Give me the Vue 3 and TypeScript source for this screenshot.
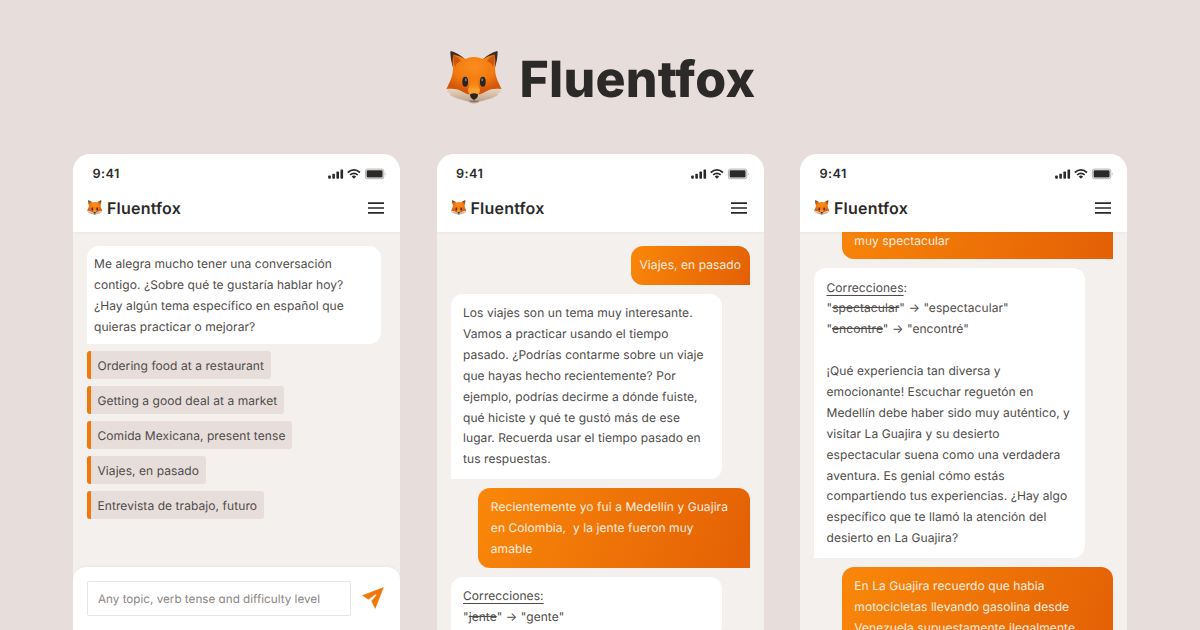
<script setup lang="ts">
import { defineComponent, h } from 'vue'

const Fox = defineComponent({
  name: 'FoxIcon',
  props: { uid: { type: String, required: true } },
  setup(props) {
    const u = props.uid
    return () =>
      h('svg', { viewBox: '0 0 56 54', 'aria-hidden': 'true' }, [
        h('defs', [
          h('radialGradient', { id: `${u}-face`, cx: '0.5', cy: '0.3', r: '0.62' }, [
            h('stop', { offset: '0', 'stop-color': '#fb8d1c' }),
            h('stop', { offset: '0.6', 'stop-color': '#f27a10' }),
            h('stop', { offset: '1', 'stop-color': '#d3560a' }),
          ]),
          h('linearGradient', { id: `${u}-jaw`, x1: '0', y1: '0', x2: '0', y2: '1' }, [
            h('stop', { offset: '0', 'stop-color': '#f6dfc6' }),
            h('stop', { offset: '1', 'stop-color': '#b59c88' }),
          ]),
          h('linearGradient', { id: `${u}-snout`, x1: '0', y1: '0', x2: '0', y2: '1' }, [
            h('stop', { offset: '0', 'stop-color': '#f98a14', 'stop-opacity': '0' }),
            h('stop', { offset: '0.65', 'stop-color': '#fda024' }),
            h('stop', { offset: '1', 'stop-color': '#f2a04a' }),
          ]),
        ]),
        h('path', { d: 'M1 37 L0 39 L2 40 L1 42 L4 43 L4 45 C10 49 18 50 22 51.5 Q28 55.5 34 51.5 C39 50 46 49 52 45 L52 43 L55 42 L54 40 L56 39 L54 36 Z', fill: `url(#${u}-jaw)` }),
        h('path', { d: 'M5 1 Q4 1 4.4 4 Q4.6 10 6.8 17 L19 9 Q12 3 5 1 Z M51 1 Q52 1 51.6 4 Q51.4 10 49.2 17 L37 9 Q44 3 51 1 Z', fill: '#3c2d25' }),
        h('path', { d: 'M7.5 4.6 Q14 6 19 9 Q28 5 37 9 Q42 6 48.5 4.6 Q50 10 49 17 C49 27 52 31 55.5 39 C49 38 43 39 39 42 Q34 45 31 44.5 L25 44.5 Q22 45 17 42 C13 39 7 38 .5 39 C4 31 7 27 7 17 Q6 9 7.5 4.6 Z', fill: `url(#${u}-face)` }),
        h('path', { d: 'M7.5 5 Q12 7 15 11 Q10 13 9 17 Q7 10 7.5 5 Z M48.5 5 Q44 7 41 11 Q46 13 47 17 Q49 10 48.5 5 Z', fill: '#cf560b' }),
        h('path', { d: 'M25 27 L31 27 Q32 35 34 40 Q34 45 28 46 Q22 45 22 40 Q24 35 25 27 Z', fill: `url(#${u}-snout)` }),
        h('ellipse', { cx: 19.2, cy: 31.8, rx: 2.9, ry: 5, fill: '#2a2422' }),
        h('ellipse', { cx: 36.8, cy: 31.8, rx: 2.9, ry: 5, fill: '#2a2422' }),
        h('ellipse', { cx: 19.8, cy: 29.8, rx: 1, ry: 1.5, fill: '#68788a' }),
        h('ellipse', { cx: 36.2, cy: 29.8, rx: 1, ry: 1.5, fill: '#68788a' }),
        h('path', { d: 'M24 44.5 Q28 42 32 44.5 Q32 48 28 50 Q24 48 24 44.5 Z', fill: '#2d2420' }),
        h('path', { d: 'M28 49 V51 M23.5 51 Q28 52 32.5 51', fill: 'none', stroke: '#6d584b', 'stroke-width': '0.8' }),
      ])
  },
})

interface Part {
  text: string
  mark?: 'under' | 'strike'
}
interface Message {
  from: 'bot' | 'user'
  kind?: string
  lines: Part[][]
}
interface Phone {
  id: string
  messages: Message[]
  topics?: string[]
  composer?: string
}

const plain = (...rows: string[]): Part[][] => rows.map((text) => [{ text }])

const phones: Phone[] = [
  {
    id: 'screen-start',
    messages: [
      {
        from: 'bot',
        kind: 'intro',
        lines: plain(
          'Me alegra mucho tener una conversación',
          'contigo. ¿Sobre qué te gustaría hablar hoy?',
          '¿Hay algún tema específico en español que',
          'quieras practicar o mejorar?',
        ),
      },
    ],
    topics: [
      'Ordering food at a restaurant',
      'Getting a good deal at a market',
      'Comida Mexicana, present tense',
      'Viajes, en pasado',
      'Entrevista de trabajo, futuro',
    ],
    composer: 'Any topic, verb tense and difficulty level',
  },
  {
    id: 'screen-travel',
    messages: [
      { from: 'user', kind: 'short', lines: plain('Viajes, en pasado') },
      {
        from: 'bot',
        lines: plain(
          'Los viajes son un tema muy interesante.',
          'Vamos a practicar usando el tiempo',
          'pasado. ¿Podrías contarme sobre un viaje',
          'que hayas hecho recientemente? Por',
          'ejemplo, podrías decirme a dónde fuiste,',
          'qué hiciste y qué te gustó más de ese',
          'lugar. Recuerda usar el tiempo pasado en',
          'tus respuestas.',
        ),
      },
      {
        from: 'user',
        lines: plain('Recientemente yo fui a Medellín y Guajira', 'en Colombia,  y la jente fueron muy', 'amable'),
      },
      {
        from: 'bot',
        lines: [
          [{ text: 'Correcciones:', mark: 'under' }],
          [{ text: '"' }, { text: 'jente', mark: 'strike' }, { text: '" → "gente"' }],
        ],
      },
    ],
  },
  {
    id: 'screen-corrections',
    messages: [
      { from: 'user', kind: 'cut', lines: plain('muy spectacular') },
      {
        from: 'bot',
        lines: [
          [{ text: 'Correcciones', mark: 'under' }, { text: ':' }],
          [{ text: '"' }, { text: 'spectacular', mark: 'strike' }, { text: '" → "espectacular"' }],
          [{ text: '"' }, { text: 'encontre', mark: 'strike' }, { text: '" → "encontré"' }],
          [{ text: ' ' }],
          ...plain(
            '¡Qué experiencia tan diversa y',
            'emocionante! Escuchar reguetón en',
            'Medellín debe haber sido muy auténtico, y',
            'visitar La Guajira y su desierto',
            'espectacular suena como una verdadera',
            'aventura. Es genial cómo estás',
            'compartiendo tus experiencias. ¿Hay algo',
            'específico que te llamó la atención del',
            'desierto en La Guajira?',
          ),
        ],
      },
      {
        from: 'user',
        lines: plain(
          'En La Guajira recuerdo que habia',
          'motocicletas llevando gasolina desde',
          'Venezuela supuestamente ilegalmente',
        ),
      },
    ],
  },
]
</script>

<template>
  <main class="page">
    <h1 class="hero">
      <Fox uid="hero" class="hero-fox" />
      <span class="hero-name">Fluentfox</span>
    </h1>
    <div class="phones">
      <section v-for="p in phones" :key="p.id" class="phone">
        <header class="head">
          <div class="status">
            <span class="time">9:41</span>
            <svg class="indicators" viewBox="0 0 60 12" aria-hidden="true">
              <g fill="#2b2a29">
                <rect x="1.2" y="7.5" width="2.6" height="3.2" rx="0.7" />
                <rect x="5.3" y="5.8" width="2.6" height="4.9" rx="0.7" />
                <rect x="9.4" y="3.6" width="2.6" height="7.1" rx="0.7" />
                <rect x="13.5" y="1.4" width="2.6" height="9.3" rx="0.7" />
                <path d="M26.9 10.7 L29.1 8.4 Q26.9 6.8 24.7 8.4 Z" />
              </g>
              <g fill="none" stroke="#2b2a29" stroke-width="1.7">
                <path d="M23.1 6.9 Q26.9 3.9 30.7 6.9" />
                <path d="M20.8 4.5 Q26.9 -0.6 33 4.5" />
              </g>
              <rect x="38.4" y="1.1" width="18.4" height="9.6" rx="2" fill="none" stroke="#aaa8a7" stroke-width="0.9" />
              <rect x="39.6" y="2.3" width="16" height="7.2" rx="1.1" fill="#2b2a29" />
              <path d="M58 4.4 Q59.4 6 58 7.6 Z" fill="#aaa8a7" />
            </svg>
          </div>
          <div class="bar">
            <span class="brand">
              <Fox :uid="p.id" class="brand-fox" />
              <span class="brand-name">Fluentfox</span>
            </span>
            <svg class="menu" viewBox="0 0 16 12" aria-hidden="true">
              <path d="M0 1.2 H16 M0 6 H16 M0 10.8 H16" stroke="#2b2a29" stroke-width="1.7" />
            </svg>
          </div>
        </header>
        <div class="chat">
          <div v-for="(m, i) in p.messages" :key="i" class="bubble" :class="[m.from, m.kind]">
            <div v-for="(line, j) in m.lines" :key="j" class="line">
              <span v-for="(part, k) in line" :key="k" :class="part.mark">{{ part.text }}</span>
            </div>
          </div>
          <ul v-if="p.topics" class="topics">
            <li v-for="t in p.topics" :key="t">{{ t }}</li>
          </ul>
        </div>
        <footer v-if="p.composer" class="composer">
          <div class="field">{{ p.composer }}</div>
          <svg class="send" viewBox="0 0 22 22" aria-hidden="true">
            <path d="M21.4 0.6 L0.5 8.4 L6.4 12.2 L13.4 7.3 Q14.8 7 14.4 8.4 L9.6 14 L13.2 21.4 Z" fill="#f07808" stroke="#f07808" stroke-width="0.5" stroke-linejoin="round" />
          </svg>
        </footer>
      </section>
    </div>
  </main>
</template>

<style>
body {
  margin: 0;
  overflow: hidden;
}
</style>

<style scoped>
.page {
  box-sizing: border-box;
  width: 1200px;
  height: 630px;
  overflow: hidden;
  display: flex;
  flex-direction: column;
  background: #e7dedc;
  font-family: Inter, "Liberation Sans", sans-serif;
  text-rendering: geometricPrecision;
  color: #4e4b49;
}
.hero {
  margin: 0;
  height: 154px;
  flex: none;
  box-sizing: border-box;
  padding: 50px 0 0 446px;
  display: flex;
  align-items: flex-start;
  color: #2b2a29;
}
.hero-fox {
  width: 56px;
  height: 54px;
}
.hero-name {
  margin-left: 17.5px;
  font-size: 50px;
  line-height: 60px;
  font-weight: 800;
  font-optical-sizing: none;
  letter-spacing: 0.25px;
}
.phones {
  flex: 1;
  min-height: 0;
  display: grid;
  grid-template-columns: repeat(3, 327px);
  gap: 36.5px;
  padding-left: 73px;
}
.phone {
  min-height: 0;
  display: flex;
  flex-direction: column;
  overflow: hidden;
  background: #f4f0ee;
  border-radius: 17px 17px 0 0;
}
.head {
  flex: none;
  height: 78.4px;
  box-sizing: border-box;
  padding: 11px 14px 0;
  background: #fff;
  box-shadow: 0 1px 2px rgba(70, 50, 40, 0.05);
  z-index: 1;
}
.status {
  height: 18px;
  display: flex;
  align-items: center;
  justify-content: space-between;
  padding-left: 5.5px;
}
.time {
  font-size: 12.7px;
  font-weight: 600;
  letter-spacing: 0.4px;
  color: #2b2a29;
}
.indicators {
  width: 60px;
  height: 12px;
  margin-right: -0.5px;
}
.bar {
  display: flex;
  align-items: center;
  justify-content: space-between;
  height: 24px;
  margin-top: 13px;
}
.brand {
  display: flex;
  align-items: center;
}
.brand-fox {
  width: 15.5px;
  height: 15px;
  margin: -2px 4.5px 0 0;
}
.brand-name {
  font-size: 16px;
  line-height: 24px;
  font-weight: 600;
  letter-spacing: 0.2px;
  color: #2b2a29;
}
.menu {
  width: 16px;
  height: 12px;
  margin: 0.5px 2.5px 0 0;
}
.chat {
  flex: 1;
  min-height: 0;
  overflow: hidden;
  padding: 14px 14px 0 14px;
  display: flex;
  flex-direction: column;
  gap: 9px;
}
.bubble {
  flex: none;
  box-sizing: border-box;
  width: 271.2px;
  padding: 9.2px 12px 8.6px 12.5px;
  font-size: 12px;
  line-height: 20.9px;
  letter-spacing: 0.07px;
  white-space: pre;
}
.line {
  height: 20.9px;
}
.bot {
  background: #fff;
  border-radius: 12px 12px 12px 0;
}
.user {
  align-self: flex-end;
  background: linear-gradient(110deg, #fa8709, #e36005);
  border-radius: 12px 12px 0 12px;
  color: #fdeee0;
}
.intro {
  width: 294px;
  height: 97.6px;
  padding: 7px;
  line-height: 21px;
}
.intro .line {
  height: 21px;
}
.short {
  width: 119px;
  padding: 9px;
  height: 38.5px;
}
.cut {
  margin-top: -71.9px;
  padding-top: 56px;
  padding-bottom: 8px;
}
.under {
  text-decoration: underline;
  text-underline-offset: 3px;
  text-decoration-thickness: 1px;
}
.strike {
  text-decoration: line-through;
}
.topics {
  list-style: none;
  margin: -2px 0 0;
  padding: 0;
  display: flex;
  flex-direction: column;
  align-items: flex-start;
  gap: 7px;
}
.topics li {
  height: 28px;
  box-sizing: border-box;
  padding: 0 7px 0 6.5px;
  border-left: 4px solid #f07808;
  border-radius: 3px;
  background: #e7dedc;
  font-size: 12px;
  line-height: 29px;
  letter-spacing: 0.07px;
}
.composer {
  flex: none;
  height: 63px;
  box-sizing: border-box;
  padding: 14px 16.5px 0 14px;
  display: flex;
  align-items: flex-start;
  justify-content: space-between;
  background: #fff;
  border-radius: 13px 13px 0 0;
  box-shadow: 0 -1px 3px rgba(70, 50, 40, 0.05);
}
.field {
  width: 264px;
  height: 35px;
  box-sizing: border-box;
  border: 1px solid #e8e5e3;
  border-radius: 2px;
  padding-left: 10px;
  font-size: 11.7px;
  line-height: 34px;
  font-feature-settings: "cv11";
  color: #8a8684;
  white-space: nowrap;
}
.send {
  width: 22px;
  height: 22px;
  margin-top: 6px;
}
</style>
